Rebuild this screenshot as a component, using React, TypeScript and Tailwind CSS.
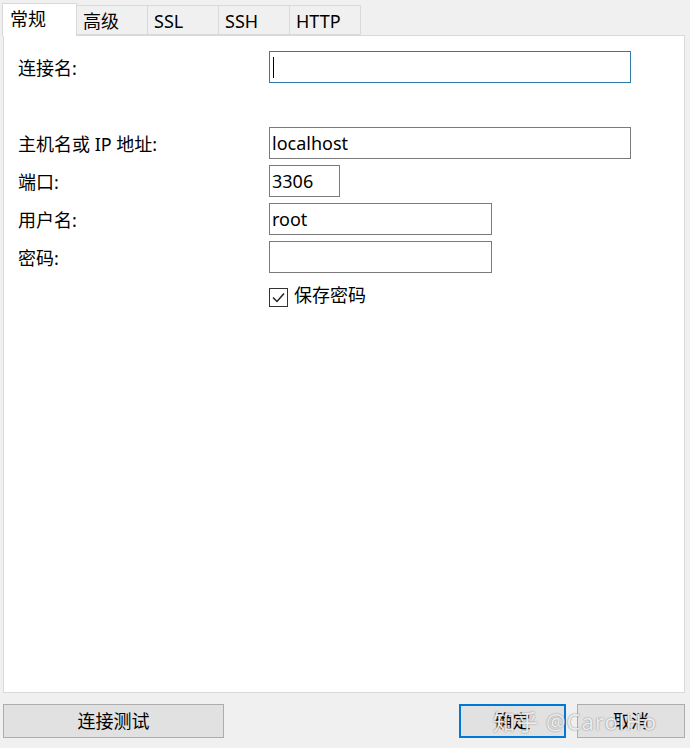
import React from "react";

const font = {
  fontFamily: '"Noto Sans", "Noto Sans CJK SC", sans-serif',
};

const tabs = ["常规", "高级", "SSL", "SSH", "HTTP"];

interface FieldProps {
  label: string;
  width: string;
  value?: string;
  focused?: boolean;
}

function Field({ label, width, value, focused }: FieldProps) {
  return (
    <div className="flex items-center">
      <div className="w-[251px] shrink-0 pt-[2px]">{label}</div>
      <div
        className={`relative flex h-[32px] items-center bg-white pl-[2px] ${width} ${
          focused ? "border border-[#2f7aa8]" : "border border-[#7a7a7a]"
        }`}
      >
        {value && <span className="leading-none">{value}</span>}
        {focused && <span className="ml-[1px] h-[21px] w-px bg-black" />}
      </div>
    </div>
  );
}

export default function App() {
  return (
    <div
      className="flex h-[748px] w-[690px] flex-col bg-[#f0f0f0] text-[18px] text-black"
      style={font}
    >
      {/* tab strip */}
      <div className="flex h-[35px] items-end pl-[2px]">
        {tabs.map((t, i) =>
          i === 0 ? (
            <div
              key={t}
              className="relative z-10 -mb-px flex h-[33px] w-[75px] items-start border border-b-0 border-[#d9d9d9] bg-white pl-[7px] pt-[2px]"
            >
              {t}
            </div>
          ) : (
            <div
              key={t}
              className="flex h-[30px] w-[71px] items-start border border-l-0 border-[#d9d9d9] bg-[#f0f0f0] pl-[6px] pt-[2px]"
            >
              {t}
            </div>
          )
        )}
      </div>

      {/* panel */}
      <div className="ml-[3px] flex h-[658px] w-[682px] flex-col border border-[#d9d9d9] bg-white pl-[14px] pt-[15px]">
        <Field label="连接名:" width="w-[362px]" focused />
        <div className="mt-[44px] flex flex-col gap-[6px]">
          <Field label="主机名或 IP 地址:" width="w-[362px]" value="localhost" />
          <Field label="端口:" width="w-[71px]" value="3306" />
          <Field label="用户名:" width="w-[223px]" value="root" />
          <Field label="密码:" width="w-[223px]" />
        </div>
        <div className="mt-[12px] flex items-center pl-[251px]">
          <div className="flex h-[19px] w-[19px] items-center justify-center border border-[#333333] bg-white">
            <svg width="15" height="15" viewBox="0 0 15 15">
              <path d="M2 7.5 L6 11.5 L13 3.5" fill="none" stroke="#222" strokeWidth="1.5" />
            </svg>
          </div>
          <span className="ml-[6px] -mt-[3px]">保存密码</span>
        </div>
      </div>

      {/* buttons */}
      <div className="relative mt-[11px] flex pl-[3px] pr-[5px]">
        <button className="h-[34px] w-[221px] border border-[#adadad] bg-[#e1e1e1] text-[18px]">
          连接测试
        </button>
        <div className="flex-1" />
        <button className="h-[34px] w-[107px] border-2 border-[#0078d7] bg-[#e1e1e1] text-[18px]">
          确定
        </button>
        <button className="ml-[11px] h-[34px] w-[108px] border border-[#adadad] bg-[#e1e1e1] text-[18px]">
          取消
        </button>
        <div className="pointer-events-none absolute left-[493px] top-[1px] text-[22px] tracking-[1px] text-white/85 [text-shadow:0_0_1.5px_#666]">
          知乎 @CarolHo
        </div>
      </div>
    </div>
  );
}
